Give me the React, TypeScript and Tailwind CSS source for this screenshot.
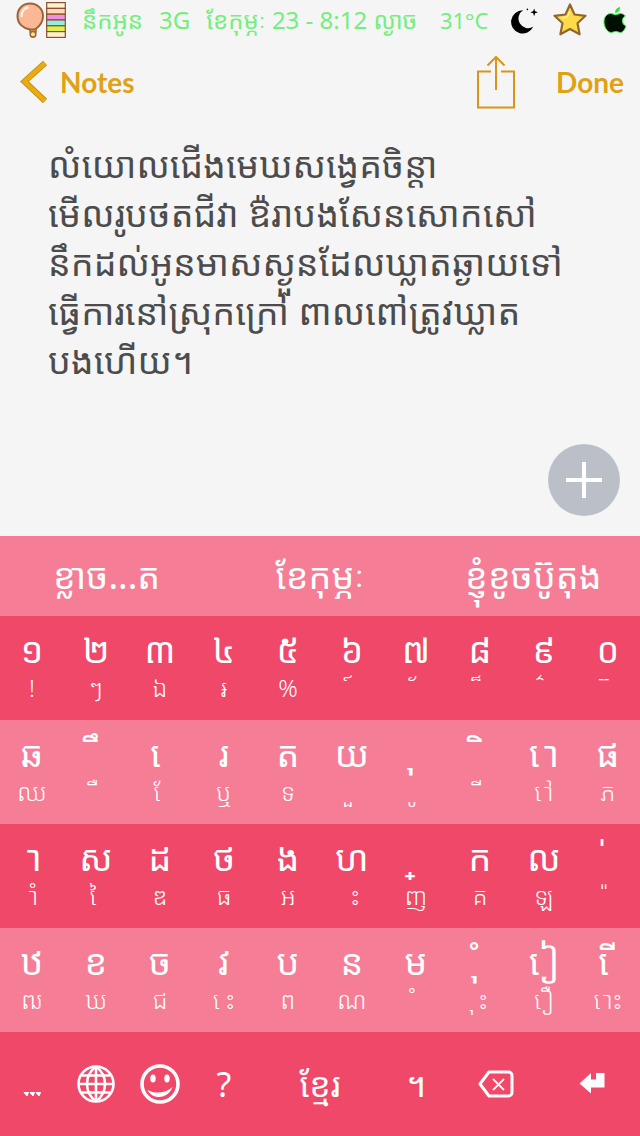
import React from "react";

type Key = { main: string; sub: string };

const NB = "\u00a0";

const rows: Key[][] = [
  [
    { main: "១", sub: "!" },
    { main: "២", sub: "ៗ" },
    { main: "៣", sub: "ឯ" },
    { main: "៤", sub: "៛" },
    { main: "៥", sub: "%" },
    { main: "៦", sub: NB + "៍" },
    { main: "៧", sub: NB + "័" },
    { main: "៨", sub: NB + "៏" },
    { main: "៩", sub: NB + "៌" },
    { main: "០", sub: NB + "៊" },
  ],
  [
    { main: "ឆ", sub: "ឈ" },
    { main: NB + "ឹ", sub: NB + "ឺ" },
    { main: NB + "េ", sub: NB + "ែ" },
    { main: "រ", sub: "ឬ" },
    { main: "ត", sub: "ទ" },
    { main: "យ", sub: NB + "ួ" },
    { main: NB + "ុ", sub: NB + "ូ" },
    { main: NB + "ិ", sub: NB + "ី" },
    { main: NB + "ោ", sub: NB + "ៅ" },
    { main: "ផ", sub: "ភ" },
  ],
  [
    { main: NB + "ា", sub: NB + "ាំ" },
    { main: "ស", sub: NB + "ៃ" },
    { main: "ដ", sub: "ឌ" },
    { main: "ថ", sub: "ធ" },
    { main: "ង", sub: "អ" },
    { main: "ហ", sub: NB + "ះ" },
    { main: NB + "្", sub: "ញ" },
    { main: "ក", sub: "គ" },
    { main: "ល", sub: "ឡ" },
    { main: NB + "់", sub: NB + "៉" },
  ],
  [
    { main: "ឋ", sub: "ឍ" },
    { main: "ខ", sub: "ឃ" },
    { main: "ច", sub: "ជ" },
    { main: "វ", sub: NB + "េះ" },
    { main: "ប", sub: "ព" },
    { main: "ន", sub: "ណ" },
    { main: "ម", sub: NB + "ំ" },
    { main: NB + "ុំ", sub: NB + "ុះ" },
    { main: NB + "ៀ", sub: NB + "ឿ" },
    { main: NB + "ើ", sub: NB + "ោះ" },
  ],
];

const noteText = [
  "លំយោលជើងមេឃសង្វេគចិន្តា",
  "មើលរូបថតជីវា ឱ៉រាបងសែនសោកសៅ",
  "នឹកដល់អូនមាសស្ងួនដែលឃ្លាតឆ្ងាយទៅ",
  "ធ្វើការនៅស្រុកក្រៅ ពាលពៅត្រូវឃ្លាត",
  "បងហើយ។",
].join("\n");

function BalloonIcon() {
  return (
    <svg width="28" height="38" viewBox="0 0 28 36" aria-hidden="true">
      <path d="M14 27h6v3h-6z" fill="#f5c95f" stroke="#a0692e" strokeWidth="1.5" />
      <circle cx="17" cy="32.300" r="2.800" fill="#f8e3a0" stroke="#a0692e" strokeWidth="1.6" />
      <path d="M14 1.500C6.500 1.500 1.500 7 1.500 14c0 8 6 12.500 12.500 13.500h5C24 24 27 20 27 14 27 7 21.500 1.500 14 1.500Z" fill="#fcb795" stroke="#98643a" strokeWidth="2" />
      <path d="M5.500 14c0-4 2.500-7.500 6-8.500" fill="none" stroke="#fff0e4" strokeWidth="2.500" strokeLinecap="round" />
    </svg>
  );
}

function StripesIcon() {
  const bands = ["#fff0d2", "#ffd9b8", "#ee90df", "#92efe0", "#dff24b", "#fff0d2"];
  return (
    <svg width="20" height="36" viewBox="0 0 20 36" aria-hidden="true">
      {bands.map((fill, i) => (
        <rect key={i} x="0.7" y={0.6 + i * 5.8} width="18.6" height="5.8" fill={fill} stroke="#8c4f2b" strokeWidth="1.2" />
      ))}
    </svg>
  );
}

function StatusBar() {
  return (
    <div className="flex h-10 items-center justify-between pl-4 pr-3 text-[#74ee7c]">
      <span className="flex items-center gap-4 whitespace-nowrap text-[24px]">
        <span className="flex items-center gap-0.5">
          <BalloonIcon />
          <StripesIcon />
        </span>
        <span>នឹកអូន</span>
        <span>3G</span>
        <span>ខែកុម្ភៈ 23 - 8:12 ល្ងាច</span>
      </span>
      <span className="text-[22px]">31°C</span>
      <span className="flex items-center gap-3.5">
        <svg width="27" height="28" viewBox="0 0 28 28" aria-hidden="true">
          <path d="M12.500 4A12 12 0 1 0 23 21 9.500 9.500 0 0 1 12.500 4Z" fill="#000" />
          <path d="m24 2 1 3 3 1-3 1-1 3-1-3-3-1 3-1z" fill="#000" />
          <circle cx="17" cy="3" r="0.8" fill="#000" />
        </svg>
        <svg width="36" height="36" viewBox="0 0 36 36" aria-hidden="true">
          <path d="M18 2.500 22.500 12.500 33.500 13.800 25.500 21.300 27.600 32.300 18 27 8.400 32.300 10.500 21.300 2.500 13.800 13.500 12.500Z" fill="#ffda48" stroke="#8f672f" strokeWidth="2.200" strokeLinejoin="round" />
          <path d="m10 16 5-1 2.500-5" fill="none" stroke="#fff0a6" strokeWidth="1.500" />
        </svg>
        <svg width="26" height="30" viewBox="0 0 26 30" aria-hidden="true">
          <path
            d="M18.500 8.500c2 0 3.700 1 4.800 2.500-4.300 2.600-3.600 8.300.7 10-1 3-3 6.500-5.400 6.500-1.800 0-2.700-1-4.800-1s-3 1-4.700 1C5.500 27.500 2 22 2 16.700 2 11.500 5.300 8.600 8.700 8.600c2 0 3.500 1.200 5 1.200 1.200 0 3-1.300 4.800-1.300Z"
            fill="#001000" stroke="#3df04c" strokeWidth="1"
          />
          <path d="M13 8c-.2-3 2.500-5.700 5-6 .3 3-2.200 6-5 6Z" fill="#22e634" />
        </svg>
      </span>
    </div>
  );
}

function NavBar() {
  return (
    <header className="flex h-[84px] items-center justify-between pl-5 pr-4 text-[28px] font-bold text-[#dfa216] [font-family:Lato,sans-serif]">
      <button type="button" className="flex items-center gap-3">
        <svg width="28" height="42" viewBox="0 0 28 42" aria-hidden="true">
          <path d="M25 2 4.500 20.500 25 40" fill="none" stroke="#c58a10" strokeWidth="6" />
          <path d="M25 2 4.500 20.500 25 40" fill="none" stroke="#e8ac12" strokeWidth="4.400" />
        </svg>
        Notes
      </button>
      <span className="flex items-center gap-10">
        <button type="button" aria-label="Share">
          <svg width="40" height="54" viewBox="0 0 40 54" fill="none" stroke="#d9951a" strokeWidth="2" aria-hidden="true">
            <path d="M15 16.500H2V52.500H38V16.500H25" />
            <path d="M20 35V2M11.500 10.500 20 2l8.500 8.500" />
          </svg>
        </button>
        <button type="button">Done</button>
      </span>
    </header>
  );
}

function BottomRow() {
  const key = "flex items-center justify-center";
  return (
    <div className="grid h-[104px] grid-cols-20 bg-[#f04868] text-[34px]">
      <button type="button" className={key + " col-span-2"} aria-label="More">
        <svg width="20" height="28" viewBox="0 0 20 28" fill="#fff" aria-hidden="true">
          <path d="M2 22.500h4.500L5 26ZM8 22.500h4.500L11 26ZM14 22.500h4.500L17 26Z" stroke="#fff" strokeLinejoin="round" />
        </svg>
      </button>
      <button type="button" className={key + " col-span-2"} aria-label="Language">
        <svg width="38" height="38" viewBox="0 0 38 38" fill="none" stroke="#fff" strokeWidth="2.600" aria-hidden="true">
          <circle cx="19" cy="19" r="17.500" />
          <path d="M19 1.500v35M1.500 19h35M4.500 10.500h29M4.500 27.500h29" />
          <path d="M19 1.500c-12 9-12 26 0 35M19 1.500c12 9 12 26 0 35" />
        </svg>
      </button>
      <button type="button" className={key + " col-span-2"} aria-label="Emoji">
        <svg width="40" height="40" viewBox="0 0 40 40" aria-hidden="true">
          <circle cx="20" cy="20" r="18" fill="none" stroke="#fff" strokeWidth="3.600" />
          <ellipse cx="13" cy="14.500" rx="2.700" ry="4" fill="#fff" />
          <ellipse cx="27" cy="14.500" rx="2.700" ry="4" fill="#fff" />
          <path d="M7.500 26c7 4 18 3.500 25-3-4 12-20 13.500-25 3Z" fill="#fff" />
        </svg>
      </button>
      <button type="button" className={key + " col-span-2"}>?</button>
      <button type="button" className={key + " col-span-4"}>ខ្មែរ</button>
      <button type="button" className={key + " col-span-2"}>។</button>
      <button type="button" className={key + " col-span-3"} aria-label="Delete">
        <svg width="36" height="28" viewBox="0 0 36 28" fill="none" stroke="#fff" aria-hidden="true">
          <path d="M11 2H30.500a3.500 3.500 0 0 1 3.500 3.500v17a3.500 3.500 0 0 1-3.500 3.500H11L2 14Z" strokeWidth="3" strokeLinejoin="round" />
          <path d="m15 9 11 11M26 9 15 20" strokeWidth="1.800" />
        </svg>
      </button>
      <button type="button" className={key + " col-span-3"} aria-label="Return">
        <svg width="26" height="24" viewBox="0 0 26 24" aria-hidden="true">
          <path d="M25.500 1v14.500H12v6L.5 11.500 12 1v6.500h5V1Z" fill="#fff" />
        </svg>
      </button>
    </div>
  );
}

export default function App() {
  return (
    <div className="flex min-h-screen flex-col bg-[#f5f5f5] [font-family:'Noto_Sans_Khmer','Noto_Sans',sans-serif]">
      <StatusBar />
      <NavBar />
      <main className="flex flex-1 flex-col">
        <textarea
          aria-label="Note"
          rows={5}
          spellCheck={false}
          defaultValue={noteText}
          className="mt-4 w-full resize-none overflow-hidden whitespace-pre bg-transparent px-12 text-[36px] leading-[49px] text-[#4c4c4c] outline-none"
        />
        <button
          type="button"
          aria-label="Add"
          className="mb-5 mr-5 mt-auto flex size-[72px] items-center justify-center self-end rounded-full bg-[#bbbfc8]"
        >
          <svg width="38" height="38" viewBox="0 0 38 38" stroke="#fff" strokeWidth="4" aria-hidden="true">
            <path d="M19 1v36M1 19h36" />
          </svg>
        </button>
      </main>
      <section aria-label="Keyboard" className="text-white">
        <div className="grid h-20 grid-cols-3 bg-[#f57d96] text-[36px]">
          <button type="button">ខ្លាច...ត</button>
          <button type="button">ខែកុម្ភៈ</button>
          <button type="button">ខ្ញុំខូចប៊ូតុង</button>
        </div>
        {rows.map((row, i) => (
          <div key={i} className={i % 2 ? "grid grid-cols-10 bg-[#f57d96]" : "grid grid-cols-10 bg-[#f04868]"}>
            {row.map((k) => (
              <button key={k.main} type="button" className="flex h-[104px] flex-col items-center pt-3">
                <span className="text-[36px] leading-[44px]">{k.main}</span>
                <span className="text-[24px] leading-[32px] font-light text-white">{k.sub}</span>
              </button>
            ))}
          </div>
        ))}
        <BottomRow />
      </section>
    </div>
  );
}
